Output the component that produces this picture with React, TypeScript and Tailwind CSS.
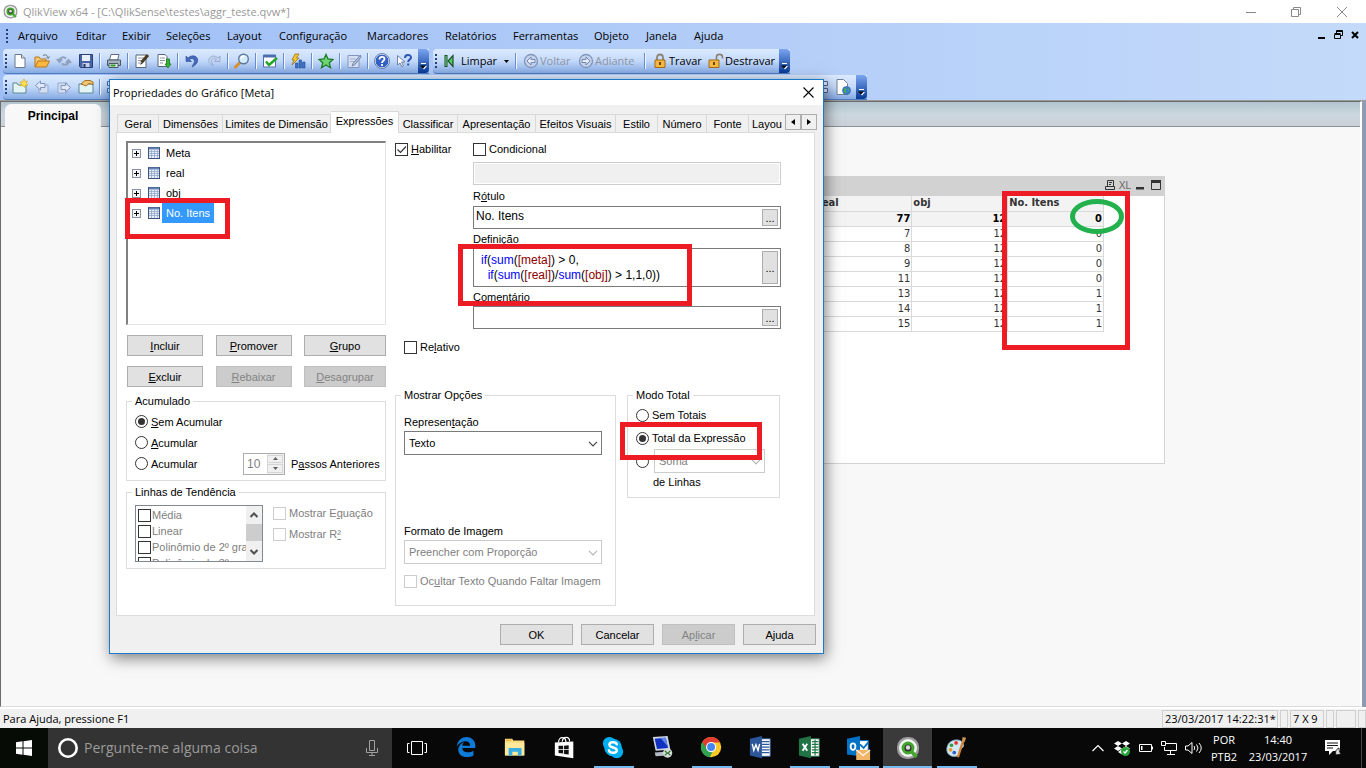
import type { ReactNode } from 'react';

const icons: Record<string, ReactNode> = {
  new: (
    <>
      <path d="M3 1.5h6.5L13 5v9.5H3z" fill="#fff" stroke="#6b7688" />
      <path d="M9.5 1.5V5H13" fill="#dfe6f2" stroke="#6b7688" />
    </>
  ),
  open: (
    <>
      <path d="M1 14V4h4l1.5 2H12v3" fill="#f7c873" stroke="#b9771d" />
      <path d="M1 14l3-6h11.5l-3 6z" fill="#fbb840" stroke="#b9771d" />
      <path d="M9 2.500c3-1.500 4.500 0 5 2m-1.500-.5l1.500 1.500 1.500-2" fill="none" stroke="#68707c" />
    </>
  ),
  refresh: (
    <g fill="none" stroke="#8fa0bd" strokeWidth="2">
      <path d="M10 5.500c-2-2-6-1.500-6.500 1.500M1 6l2.500 3L6 6" />
      <path d="M6 10.500c2 2 6 1.500 6.500-1.500M15 10l-2.500-3L10 10" />
    </g>
  ),
  save: (
    <>
      <path d="M1.500 1.500h13v13h-12l-1-1z" fill="#4763a8" stroke="#2b4179" />
      <path d="M4 2h8v6H4z" fill="#e9eef8" />
      <path d="M4.500 10h7v4h-7z" fill="#c9d2e4" />
      <path d="M5.500 11h2v3h-2z" fill="#22325f" />
    </>
  ),
  print: (
    <>
      <path d="M5 1.500h8L11.500 7h-8z" fill="#fff" stroke="#5f6b7c" />
      <path d="M1.500 7h13v5.500h-13z" fill="#a8b2bf" stroke="#4c5868" />
      <path d="M3 10.500h9v4H3z" fill="#e4e9ef" stroke="#4c5868" />
      <path d="M4.500 12.500h5" stroke="#2ba02b" strokeWidth="2" />
    </>
  ),
  edit: (
    <>
      <path d="M2 2h10v12.500H2z" fill="#fff" stroke="#5b6678" />
      <path d="M4 5h6M4 7.500h5M4 10h3" stroke="#8d98aa" />
      <path d="M14 2L7.500 9.500" stroke="#4d3a22" strokeWidth="3" />
      <path d="M7.500 9.500L6 12l2.500-1.500" fill="#222" />
    </>
  ),
  export: (
    <>
      <path d="M2 1.500h7l2 2v10H2z" fill="#fff" stroke="#5b6678" />
      <path d="M4 5h5M4 7.500h5M4 10h3" stroke="#8d98aa" />
      <path d="M10.500 6h3v5H15l-3 4-3-4h1.500z" fill="#35b535" stroke="#1b7a1b" strokeWidth=".8" />
    </>
  ),
  undo: <path d="M2 3v5.500h5.500L5.500 6.500c3-2 6 0 4.500 3.500-.5 1.200-1.500 2.200-2 4 4-2 6.500-5 5.500-8C12.500 2.500 7.500 1.500 4 5z" fill="#4668ba" stroke="#2f4d96" strokeWidth=".6" />,
  redo: <path d="M14 3v5.500H8.500l2-2c-3-2-6 0-4.500 3.500.5 1 1 1.800 1.500 2.500C3.500 11 2 8.500 3 6c1.500-3.500 6-4 9-1z" fill="#c3d2ec" stroke="#8ea3c9" strokeWidth=".8" />,
  search: (
    <>
      <path d="M6 9.500L1.500 14" stroke="#d98f2b" strokeWidth="3" strokeLinecap="round" />
      <circle cx="9.500" cy="6" r="4.800" fill="#d5ecfb" stroke="#60789a" strokeWidth="1.400" />
      <path d="M7 5.500C7.500 3.500 9 3 10.500 3" fill="none" stroke="#fff" strokeWidth="1.500" />
    </>
  ),
  check: (
    <>
      <path d="M1.500 2h12v12h-12z" fill="#fff" stroke="#4c6eae" />
      <path d="M1.500 2h12v2.500h-12z" fill="#4c6eae" />
      <path d="M4 8.500l3 3.500L15 5" fill="none" stroke="#27a527" strokeWidth="2.600" />
    </>
  ),
  quick: (
    <>
      <path d="M5 1h4L6.500 5H9L2 12l2-5H2z" fill="#f5c433" stroke="#9c761b" strokeWidth=".8" />
      <path d="M5.500 10h2.500v5H5.500zM9 7h2.500v8H9zM12.500 9H15v6h-2.500z" fill="#3d74ca" stroke="#234e96" strokeWidth=".6" />
    </>
  ),
  star: <path d="M8 1.500l2 4.500 5 .5-3.700 3.300 1.200 4.900L8 12l-4.500 2.700 1.200-4.900L1 6.500 6 6z" fill="#6fd66f" stroke="#1c7c2b" strokeWidth="1.300" />,
  note: (
    <>
      <path d="M2 2.500h11v12H2z" fill="#d5e0f4" stroke="#8496b8" />
      <path d="M4 6h6M4 8.500h4" stroke="#a0b0cf" />
      <path d="M14.500 2L7 10.500l-1 2.500 2.500-1L15 4z" fill="#b4c3dd" stroke="#7386aa" />
    </>
  ),
  help: (
    <>
      <circle cx="8" cy="8" r="7" fill="#3661c4" stroke="#fff" />
      <circle cx="8" cy="8" r="7.500" fill="none" stroke="#3b5288" strokeWidth=".7" />
      <path d="M5.500 6.500c0-3.500 5-3.500 5-.5 0 1.800-2.500 1.800-2.500 4M8 11v2" fill="none" stroke="#fff" strokeWidth="1.800" />
    </>
  ),
  whats: (
    <>
      <path d="M1.500 2.500v9.500l2.500-2 2 4 1.500-1-2-4H9z" fill="#fff" stroke="#7182a4" />
      <path d="M9 5c0-4 6-4 6-.5 0 2-2.800 2.200-2.800 4.500M12.200 10.500v2" fill="none" stroke="#2c56b4" strokeWidth="2" />
    </>
  ),
  clear: (
    <>
      <path d="M3 2v12" stroke="#1d4f2b" strokeWidth="3" />
      <path d="M3 3v10" stroke="#79e37d" />
      <path d="M10 2.500v11L5 8z" fill="#4fd257" stroke="#1d4f2b" strokeWidth="1.200" />
    </>
  ),
  back: (
    <>
      <circle cx="8" cy="8" r="6.500" fill="#c5d3ea" stroke="#8195bd" strokeWidth="1.300" />
      <path d="M8 4L4 8l4 4v-2.500h4v-3H8z" fill="#e6edf9" stroke="#7287b2" />
    </>
  ),
  forward: (
    <>
      <circle cx="8" cy="8" r="6.500" fill="#c5d3ea" stroke="#8195bd" strokeWidth="1.300" />
      <path d="M8 4l4 4-4 4V9.500H4v-3h4z" fill="#e6edf9" stroke="#7287b2" />
    </>
  ),
  lock: (
    <>
      <path d="M5 7V4.500c0-4 6-4 6 0V7" fill="none" stroke="#8c8471" strokeWidth="1.800" />
      <path d="M3 7h10v7.500H3z" fill="#f6b83f" stroke="#a36a15" />
      <path d="M8 9v3" stroke="#6c4713" strokeWidth="2" />
    </>
  ),
  unlock: (
    <>
      <path d="M8.500 7V4c0-3.500 6-3.500 6 0v1.500" fill="none" stroke="#8c8471" strokeWidth="1.600" />
      <path d="M1 7h10v7.500H1z" fill="#f6b83f" stroke="#a36a15" />
      <path d="M6 9v3" stroke="#6c4713" strokeWidth="2" />
    </>
  ),
  newSheet: (
    <>
      <path d="M1 14V4h4l1 2h8v8z" fill="#e3f5f3" stroke="#5d8796" />
      <path d="M12 0l1 2.500L15.500 2 14 4l2 2-2.500.200L12.500 8.500 11 6.500l-3 .500L9.500 5 8 3l2.500-.200z" fill="#ffe14a" stroke="#d69d1c" strokeWidth=".6" />
    </>
  ),
  sheetLeft: (
    <>
      <path d="M5 14V6h9v8z" fill="#d3def1" stroke="#96a8cb" />
      <path d="M6.500 2L1.500 6.500l5 4.500V8.500H11V4.500H6.500z" fill="#dfe8f7" stroke="#8094bd" />
    </>
  ),
  sheetRight: (
    <>
      <path d="M2 14V4h9v10z" fill="#d3def1" stroke="#96a8cb" />
      <path d="M9.500 4l5 4.500-5 4.500v-2.500H5V6.500h4.500z" fill="#dfe8f7" stroke="#8094bd" />
    </>
  ),
  sheetProps: (
    <>
      <path d="M1 14V5h14v9z" fill="#e3f5f3" stroke="#5d8796" />
      <path d="M3 5l4-3.500h5L15 3v2.500L11 4.500 8 7 5.500 6z" fill="#f3c56a" stroke="#98681f" strokeWidth=".9" />
    </>
  ),
  layout: (
    <g fill="#eaf1fc" stroke="#4766a8">
      <path d="M1.500 2.500h5v4h-5zM9.500 2.500h5v4h-5zM1.500 9.500h5v4h-5zM9.500 9.500h5v4h-5z" />
    </g>
  ),
  webPage: (
    <>
      <path d="M2 .500h6.500l4 4v11H2z" fill="#fff" stroke="#77818f" />
      <circle cx="11.500" cy="11.500" r="4" fill="#3f7fd0" stroke="#2c599c" strokeWidth=".6" />
      <path d="M9 9.500c2-1.500 3 0 2 1.500s1 2 0 3.500c-2-.5-3-3-2-5zM13 9l1.500 2-1 1.500z" fill="#3fb34a" />
    </>
  ),
};

const Icon = ({ name }: { name: string }) => (
  <svg viewBox="0 0 16 16" className="size-4 shrink-0" aria-hidden="true">
    {icons[name]}
  </svg>
);

const QlikLogo = ({ className }: { className: string }) => (
  <svg viewBox="0 0 24 24" className={className} aria-hidden="true">
    <rect x="1" y="1" width="22" height="22" rx="10" fill="#9c9c9c" />
    <circle cx="12" cy="12" r="9" fill="#f4f4f4" />
    <circle cx="12" cy="12" r="5" fill="#333" stroke="#43a62f" strokeWidth="3" />
    <path d="M15.500 15.500l5 5.500" stroke="#43a62f" strokeWidth="3.500" />
    <circle cx="12" cy="11.500" r="2.200" fill="#ddd" />
  </svg>
);

const menus = [
  ['Arquivo', 'w-[58px]'],
  ['Editar', 'w-[46px]'],
  ['Exibir', 'w-[44px]'],
  ['Seleções', 'w-[61px]'],
  ['Layout', 'w-[52px]'],
  ['Configuração', 'w-[88px]'],
  ['Marcadores', 'w-[78px]'],
  ['Relatórios', 'w-[68px]'],
  ['Ferramentas', 'w-[81px]'],
  ['Objeto', 'w-[52px]'],
  ['Janela', 'w-[48px]'],
  ['Ajuda', 'w-[48px]'],
];

const mainTools = [
  'new', 'open', 'refresh', 'save', '|', 'print', '|', 'edit', 'export', '|', 'undo', 'redo', '|',
  'search', '|', 'check', '|', 'quick', '|', 'star', '|', 'note', '|', 'help', 'whats',
];

const tabs = [
  ['Geral', 'w-[42px]'],
  ['Dimensões', 'w-[64px]'],
  ['Limites de Dimensão', 'w-[108px]'],
  ['Expressões', 'w-[68px]'],
  ['Classificar', 'w-[59px]'],
  ['Apresentação', 'w-[78px]'],
  ['Efeitos Visuais', 'w-[80px]'],
  ['Estilo', 'w-[42px]'],
  ['Número', 'w-[49px]'],
  ['Fonte', 'w-[42px]'],
  ['Layou', 'w-[36px]'],
];

const rows = [
  ['7', '12', '0'],
  ['8', '12', '0'],
  ['9', '12', '0'],
  ['11', '12', '0'],
  ['13', '12', '1'],
  ['14', '12', '1'],
  ['15', '12', '1'],
];

const Grip = () => (
  <span className="flex w-[6px] shrink-0 flex-col items-center gap-[2px]">
    <i className="size-[2px] bg-[#27417a]" />
    <i className="size-[2px] bg-[#27417a]" />
    <i className="size-[2px] bg-[#27417a]" />
    <i className="size-[2px] bg-[#27417a]" />
  </span>
);

const Separator = () => (
  <span className="flex w-[6px] shrink-0 justify-center">
    <i className="h-4 w-px bg-[#6a8ccb]" />
    <i className="h-4 w-px bg-[#f1f6ff]" />
  </span>
);

const ToolButton = ({ name, disabled }: { name: string; disabled?: boolean }) => (
  <button type="button" aria-label={name} disabled={disabled} className="flex h-[22px] w-[22px] shrink-0 items-center justify-center">
    <Icon name={name} />
  </button>
);

const MoreTools = () => (
  <button type="button" aria-label="Mais botões" className="flex h-full w-[11px] shrink-0 items-end justify-center rounded-r-sm bg-linear-to-b from-[#7ba5f0] to-[#053995] pb-[3px]">
    <svg viewBox="0 0 7 7" className="size-[7px]">
      <path d="M1 .5h5" stroke="#fff" />
      <path d="M1 3h6L4 6.500z" fill="#fff" />
      <path d="M0 2.500h6l-3 3z" fill="#000" />
    </svg>
  </button>
);

const toolbar = 'flex h-[25px] items-center rounded-l-sm border-b border-[#4f7abf] bg-linear-to-b from-[#dceafe] via-[#c3d9fa] to-[#86aae4]';

const Check = ({ children, checked, disabled }: { children: ReactNode; checked?: boolean; disabled?: boolean }) => (
  <label className={disabled ? 'flex h-[14px] items-center gap-[3px] whitespace-nowrap text-[#808080]' : 'flex h-[14px] items-center gap-[3px] whitespace-nowrap'}>
    <span className="relative flex size-[13px] shrink-0">
      <input type="checkbox" defaultChecked={checked} disabled={disabled} className="size-[13px] appearance-none border border-[#333] bg-white disabled:border-[#ccc]" />
      {checked && (
        <svg viewBox="0 0 13 13" className="pointer-events-none absolute inset-0 size-[13px]">
          <path d="M2.500 6.500l3 3 5.500-6" fill="none" stroke="#333" strokeWidth="1.200" />
        </svg>
      )}
    </span>
    <span>{children}</span>
  </label>
);

const Radio = ({ children, name, checked }: { children?: ReactNode; name: string; checked?: boolean }) => (
  <label className="flex h-[14px] items-center gap-[3px] whitespace-nowrap">
    <input
      type="radio"
      name={name}
      defaultChecked={checked}
      aria-label={children ? undefined : 'Função de linhas'}
      className="flex size-[13px] shrink-0 appearance-none items-center justify-center rounded-full border border-[#333] bg-white checked:before:size-[7px] checked:before:rounded-full checked:before:bg-[#333]"
    />
    {children && <span>{children}</span>}
  </label>
);

const PushButton = ({ children, disabled, className }: { children: ReactNode; disabled?: boolean; className: string }) => (
  <button
    type="button"
    disabled={disabled}
    className={`h-[21px] border border-[#adadad] bg-[#e1e1e1] disabled:border-[#bfbfbf] disabled:bg-[#ccc] disabled:text-[#838383] ${className}`}
  >
    {children}
  </button>
);

const Dots = () => (
  <button type="button" aria-label="Editar" className="flex w-[16px] shrink-0 items-center justify-center border border-[#adadad] bg-[#e1e1e1]">
    ...
  </button>
);

const Select = ({ id, value, disabled, className, label }: { id: string; value: string; disabled?: boolean; className: string; label?: string }) => (
  <div className={`relative ${className}`}>
    <select
      id={id}
      aria-label={label}
      disabled={disabled}
      className="h-[24px] w-full appearance-none border border-[#7a7a7a] bg-white pl-1 disabled:border-[#ccc] disabled:text-[#808080] disabled:opacity-100"
    >
      <option>{value}</option>
    </select>
    <svg viewBox="0 0 10 6" className="pointer-events-none absolute top-[10px] right-[4px] h-[6px] w-[10px]">
      <path d="M1 .8l4 4 4-4" fill="none" stroke={disabled ? '#b5b5b5' : '#444'} strokeWidth="1.200" />
    </svg>
  </div>
);

const Group = ({ title, className, children }: { title: string; className: string; children: ReactNode }) => (
  <fieldset className={`min-w-0 border border-[#dcdcdc] ${className}`}>
    <legend className="ml-[5px] h-[14px] px-[3px]">{title}</legend>
    {children}
  </fieldset>
);

const ExpressionList = () => (
  <ul className="h-[184px] border border-t-2 border-l-2 border-[#e3e3e3] border-t-[#808080] border-l-[#808080] bg-white">
    {['Meta', 'real', 'obj', 'No. Itens'].map((item) => (
      <li key={item} className="flex h-5 items-center pl-1">
        <svg viewBox="0 0 9 9" className="size-[9px]">
          <rect x=".5" y=".5" width="8" height="8" fill="#f4f4f4" stroke="#8592a8" />
          <path d="M2 4.500h5M4.500 2v5" stroke="#000" />
        </svg>
        <svg viewBox="0 0 12 12" className="ml-[7px] size-3">
          <rect x=".5" y=".5" width="11" height="11" fill="#e6eef9" stroke="#3f547d" />
          <path d="M1 1.500h10" stroke="#6482b5" strokeWidth="2" />
          <path d="M1 4.500h10M1 6.500h10M1 8.500h10M3.500 3v8M6.500 3v8M9.500 3v8" stroke="#8ba0c5" strokeWidth=".7" />
        </svg>
        <span className={item === 'No. Itens' ? 'ml-[2px] h-5 bg-[#3399ff] pr-1 pl-1 leading-5 text-white' : 'ml-[2px] pl-1 leading-5'}>{item}</span>
      </li>
    ))}
  </ul>
);

const TrendList = () => (
  <div className="flex h-[57px] w-[128px] border border-[#828790] bg-white">
    <div className="flex-1 overflow-hidden pt-px pl-[2px]">
      {['Média', 'Linear', 'Polinômio de 2º gra', 'Polinômio de 3º gra'].map((item) => (
        <label key={item} className="flex h-4 items-center gap-px whitespace-nowrap text-[#808080]">
          <input type="checkbox" className="size-[13px] shrink-0 appearance-none border border-[#333] bg-white" />
          {item}
        </label>
      ))}
    </div>
    <div className="flex w-[16px] flex-col bg-[#f0f0f0]">
      <svg viewBox="0 0 16 18" className="h-[18px]">
        <path d="M4.500 11L8 7.500l3.500 3.500" fill="none" stroke="#505050" strokeWidth="2" />
      </svg>
      <div className="h-[17px] bg-[#cdcdcd]" />
      <svg viewBox="0 0 16 20" className="h-5">
        <path d="M4.500 9L8 12.500 11.500 9" fill="none" stroke="#505050" strokeWidth="2" />
      </svg>
    </div>
  </div>
);

const LeftColumn = () => (
  <div className="w-[260px] shrink-0">
    <ExpressionList />
    <div className="mt-[10px] flex justify-between pl-px">
      <PushButton className="w-[76px]"><u>I</u>ncluir</PushButton>
      <PushButton className="w-[76px]"><u>P</u>romover</PushButton>
      <PushButton className="w-[82px]"><u>G</u>rupo</PushButton>
    </div>
    <div className="mt-[10px] flex justify-between pl-px">
      <PushButton className="w-[76px]"><u>E</u>xcluir</PushButton>
      <PushButton className="w-[76px]" disabled><u>R</u>ebaixar</PushButton>
      <PushButton className="w-[82px]" disabled><u>D</u>esagrupar</PushButton>
    </div>

    <Group title="Acumulado" className="mt-[7px] pb-[6px]">
      <div className="flex flex-col pt-[3px] pl-2">
        <div className="flex h-[21px] items-center"><Radio name="acc" checked><u>S</u>em Acumular</Radio></div>
        <div className="flex h-[21px] items-center"><Radio name="acc"><u>A</u>cumular</Radio></div>
        <div className="flex h-[21px] items-center">
          <div className="w-[108px]"><Radio name="acc">Acumular</Radio></div>
          <div className="flex h-[22px] w-[42px] border border-[#adadad] bg-white">
            <input id="steps" defaultValue="10" disabled className="w-[23px] pl-[3px] text-xs text-[#808080]" />
            <div className="flex flex-1 flex-col gap-px bg-[#f0f0f0] py-px pr-px">
              <button type="button" aria-label="Mais" className="flex flex-1 items-center justify-center border border-[#d5d5d5]">
                <svg viewBox="0 0 5 3" className="h-[3px] w-[5px]"><path d="M0 3h5L2.500 0z" fill="#606060" /></svg>
              </button>
              <button type="button" aria-label="Menos" className="flex flex-1 items-center justify-center border border-[#d5d5d5]">
                <svg viewBox="0 0 5 3" className="h-[3px] w-[5px]"><path d="M0 0h5L2.500 3z" fill="#606060" /></svg>
              </button>
            </div>
          </div>
          <label htmlFor="steps" className="ml-[6px] whitespace-nowrap">P<u>a</u>ssos Anteriores</label>
        </div>
      </div>
    </Group>

    <Group title="Linhas de Tendência" className="mt-1 pb-[6px]">
      <div className="flex gap-[10px] pt-[6px] pl-2">
        <TrendList />
        <div className="flex flex-col gap-[7px] pt-px">
          <Check disabled>Mostrar E<u>q</u>uação</Check>
          <Check disabled>Mostrar R<u>²</u></Check>
        </div>
      </div>
    </Group>
  </div>
);

const Fn = ({ children }: { children: ReactNode }) => <span className="text-[#0000ff]">{children}</span>;
const Field = ({ children }: { children: ReactNode }) => <span className="text-[#8b0000]">{children}</span>;

const RightColumn = () => (
  <div className="w-[386px] shrink-0">
    <div className="flex pt-px">
      <div className="w-[78px]"><Check checked><u>H</u>abilitar</Check></div>
      <div className="flex-1">
        <Check>Condicional</Check>
        <input aria-label="Condição" disabled className="mt-[6px] block h-[23px] w-full border border-[#ccc] bg-[#f0f0f0] outline-1 -outline-offset-2 outline-white" />
        <label htmlFor="rotulo" className="block pt-1 pb-[3px]">R<u>ó</u>tulo</label>
        <div className="flex h-[23px] border border-[#7a7a7a] bg-white p-[2px]">
          <input id="rotulo" defaultValue="No. Itens" className="min-w-0 flex-1 pb-1 text-xs outline-none" />
          <Dots />
        </div>
        <p id="definicao" className="pt-[3px] pb-[2px]">Definição</p>
        <div className="flex h-[39px] border border-[#7a7a7a] bg-white p-[2px]">
          <div role="textbox" aria-labelledby="definicao" className="flex-1 pt-[2px] pl-[5px] text-xs leading-[15px] whitespace-pre text-black">
            <Fn>if</Fn>(<Fn>sum</Fn>(<Field>[meta]</Field>) &gt; 0,{'\n  '}
            <Fn>if</Fn>(<Fn>sum</Fn>(<Field>[real]</Field>)/<Fn>sum</Fn>(<Field>[obj]</Field>) &gt; 1,1,0))
          </div>
          <Dots />
        </div>
        <label htmlFor="comentario" className="block pt-[3px] pb-[2px]">Comentário</label>
        <div className="flex h-[23px] border border-[#7a7a7a] bg-white p-[2px]">
          <input id="comentario" className="min-w-0 flex-1 outline-none" />
          <Dots />
        </div>
      </div>
    </div>

    <div className="mt-[11px] pl-[9px]"><Check>Re<u>l</u>ativo</Check></div>

    <div className="mt-[34px] flex items-start gap-[11px]">
      <Group title="Mostrar Opções" className="w-[221px] pb-[17px]">
        <div className="pt-[13px] pr-[13px] pl-2">
          <label htmlFor="rep" className="block pb-[2px]">Represen<u>t</u>ação</label>
          <Select id="rep" value="Texto" className="w-full" />
          <label htmlFor="fmt" className="mt-[69px] block pb-[2px]">Formato de Imagem</label>
          <Select id="fmt" value="Preencher com Proporção" className="w-full" disabled />
          <div className="mt-[10px]"><Check disabled>Oc<u>u</u>ltar Texto Quando Faltar Imagem</Check></div>
        </div>
      </Group>
      <Group title="Modo Total" className="w-[153px] pb-2">
        <div className="flex flex-col pt-[6px] pl-2">
          <Radio name="total">Sem Totais</Radio>
          <div className="mt-[9px]"><Radio name="total" checked>Total da Expressão</Radio></div>
          <div className="mt-1 flex items-center gap-[5px]">
            <Radio name="total" />
            <Select id="agg" value="Soma" label="Soma" className="w-[111px]" disabled />
          </div>
          <span className="mt-[2px] pl-[17px]">de Linhas</span>
        </div>
      </Group>
    </div>
  </div>
);

const Dialog = () => (
  <div
    role="dialog"
    aria-label="Propriedades do Gráfico"
    className="absolute top-[79px] left-[109px] w-[715px] border border-[#1979ca] bg-[#f0f0f0] font-['Liberation_Sans',Arial,sans-serif] text-[11px] leading-[14px] text-black shadow-[2px_4px_14px_rgba(0,0,0,0.5)]"
  >
    <div className="flex h-[25px] items-center justify-between bg-white pr-[9px] pl-[3px]">
      <h2 className="font-['Open_Sans',sans-serif] text-[11px]">Propriedades do Gráfico [Meta]</h2>
      <button type="button" aria-label="Fechar">
        <svg viewBox="0 0 11 11" className="size-[11px]"><path d="M.5.5l10 10M10.500.5l-10 10" stroke="#000" strokeWidth="1.100" /></svg>
      </button>
    </div>

    <div className="flex h-[27px] items-end pr-[7px] pl-[7px]">
      <div role="tablist" className="z-10 -mb-px flex flex-1 items-end">
        {tabs.map(([name, width]) => (
          <button
            key={name}
            type="button"
            role="tab"
            aria-selected={name === 'Expressões'}
            className={`h-[19px] shrink-0 border-t border-r border-b border-[#d9d9d9] whitespace-nowrap first:border-l last:border-r-0 aria-selected:h-[22px] aria-selected:border-b-0 aria-selected:bg-white aria-selected:pb-1 ${width}`}
          >
            {name}
          </button>
        ))}
      </div>
      <div className="mb-[2px] flex">
        <button type="button" aria-label="Anterior" className="flex size-4 items-center justify-center border border-[#adadad] bg-[#f0f0f0]">
          <svg viewBox="0 0 4 6" className="h-[6px] w-1"><path d="M4 0v6L0 3z" /></svg>
        </button>
        <button type="button" aria-label="Próximo" className="flex size-4 items-center justify-center border border-[#adadad] bg-[#f0f0f0]">
          <svg viewBox="0 0 4 6" className="h-[6px] w-1"><path d="M0 0v6l4-3z" /></svg>
        </button>
      </div>
    </div>

    <div className="mr-2 ml-[6px] flex gap-[9px] border border-[#dcdcdc] bg-white px-[9px] pt-2 pb-[9px]">
      <LeftColumn />
      <RightColumn />
    </div>

    <div className="flex justify-end gap-2 pt-2 pr-[7px] pb-2">
      <PushButton className="w-[73px]">OK</PushButton>
      <PushButton className="w-[73px]">Cancelar</PushButton>
      <PushButton className="w-[73px]" disabled>Ap<u>l</u>icar</PushButton>
      <PushButton className="w-[73px]">Ajuda</PushButton>
    </div>
  </div>
);

const Chart = () => (
  <section className="h-[288px] w-[350px] border border-[#d2d2d2] bg-white font-['DejaVu_Sans_Condensed','DejaVu_Sans',sans-serif] text-[11px] text-[#333]">
    <header className="flex h-[19px] items-center justify-end gap-1 bg-[#d2d2d2] pr-[3px] pb-[3px]">
      <svg viewBox="0 0 10 10" className="size-[10px]" fill="none" stroke="#333">
        <path d="M2.500 6V.5h6V6M.5 6.500h9v3h-9zM4 2.500h3M4 4.500h2" />
      </svg>
      <span className="font-['Open_Sans',sans-serif] text-[11px] text-[#666]">XL</span>
      <svg viewBox="0 0 10 10" className="size-[10px]"><path d="M1 7h8v2.500H1z" fill="#333" /></svg>
      <svg viewBox="0 0 10 10" className="ml-[2px] size-[10px]"><path d="M.5 1.500h9v8h-9zM0 1.500h10" fill="none" stroke="#333" /><path d="M0 0h10v3H0z" fill="#333" /></svg>
    </header>
    <table className="w-[288px] table-fixed border-collapse leading-[14px]">
      <thead>
        <tr className="h-[15px] bg-[#f3f3f3] text-left">
          <th className="border-r border-b border-[#d9d9d9] pl-px">real</th>
          <th className="border-r border-b border-[#d9d9d9] pl-px">obj</th>
          <th className="border-r border-b border-[#d9d9d9] pl-px">No. Itens</th>
        </tr>
      </thead>
      <tbody>
        <tr className="h-[15px] bg-[#f3f3f3] text-right font-bold text-black">
          <td className="border-r border-b border-[#d9d9d9] pr-px">77</td>
          <td className="border-r border-b border-[#d9d9d9] pr-px">12</td>
          <td className="border-r border-b border-[#d9d9d9] pr-px">0</td>
        </tr>
        {rows.map((row) => (
          <tr key={row[0]} className="h-[15px] text-right">
            {row.map((value, i) => (
              <td key={i} className="border-r border-b border-[#d9d9d9] pr-px">{value}</td>
            ))}
          </tr>
        ))}
      </tbody>
    </table>
  </section>
);

const apps: { name: string; running?: boolean; active?: boolean; icon: ReactNode }[] = [
  {
    name: 'Edge',
    icon: <path d="M2 11C3 4 8 1 12.500 1 18 1 22 5 22 10v3H8c0 5 7 6 12 3v5C12 25 3 22 3.500 14 4 10 7 7.500 10 6.500 8.500 8 8 9.500 8 10.500h8.500C16.500 4 7 4 2 11z" fill="#0f7bd8" />,
  },
  {
    name: 'Explorador',
    icon: (
      <>
        <path d="M1 3h8l1 2h12v16H1z" fill="#f9d978" />
        <path d="M2 4h6v1H2z" fill="#e2a92e" />
        <path d="M1 7h21v14H1z" fill="#ffe79b" />
        <path d="M5 21v-8h14v8h-4v-4H9v4z" fill="#38aee6" />
      </>
    ),
  },
  {
    name: 'Loja',
    icon: (
      <>
        <path d="M2 7l20-1v18L2 21z" fill="#fff" />
        <path d="M6 7c0-7 8-7 8 0M10 6c1-6 8-6 8 0" fill="none" stroke="#fff" strokeWidth="1.300" />
        <path d="M6 10.500h5V14H6zM12 10.500l5-.5v4h-5zM6 15h5v4l-5-.5zM12 15h5v5l-5-.5z" fill="#111" />
      </>
    ),
  },
  {
    name: 'Skype',
    running: true,
    icon: (
      <>
        <circle cx="8" cy="8" r="7" fill="#00aff0" />
        <circle cx="16" cy="17" r="7" fill="#00aff0" />
        <circle cx="12" cy="12.500" r="9.500" fill="#00aff0" />
        <path d="M16 9c-1-3-8-3-8 .5 0 4 8 2 8 6 0 3.500-7.500 3.500-8.500 0" fill="none" stroke="#fff" strokeWidth="2.600" strokeLinecap="round" />
      </>
    ),
  },
  {
    name: 'Área de Trabalho Remota',
    icon: (
      <>
        <path d="M2 1l16-1 3 15-16 1z" fill="#cdd6e2" />
        <path d="M4 3l12-1 2.500 11-12 1z" fill="#1130c0" />
        <path d="M10 2l6 0 2 9z" fill="#5b84ec" />
        <path d="M4 18l11-1 4 4-14 1z" fill="#b3bac4" />
        <circle cx="18" cy="18.500" r="5" fill="#d9dcd9" />
        <path d="M15 16l2.500 2.500L15 21M21 16l-2.500 2.500L21 21" fill="none" stroke="#39823b" strokeWidth="1.500" />
      </>
    ),
  },
  {
    name: 'Chrome',
    running: true,
    icon: (
      <>
        <circle cx="12" cy="12" r="11" fill="#fbc928" />
        <path d="M12 12L2.500 6.500A11 11 0 0 0 10.500 23L16 13z" fill="#2fa14f" />
        <path d="M12 7h9.800A11 11 0 0 0 2.500 6.500L7.700 14z" fill="#e23d31" />
        <circle cx="12" cy="12" r="5.500" fill="#fff" />
        <circle cx="12" cy="12" r="4.300" fill="#4387f4" />
      </>
    ),
  },
  {
    name: 'Word',
    icon: (
      <>
        <path d="M11 3h12v19H11z" fill="#fff" stroke="#2b579a" />
        <path d="M14 6h8M14 9h8M14 12h8M14 15h8M14 18h8" stroke="#2b579a" strokeWidth="1.300" />
        <path d="M1 3l13-3v24L1 21z" fill="#2b579a" />
        <path d="M3.500 8.500l1.700 7 2.300-6 2.300 6 1.700-7" fill="none" stroke="#fff" strokeWidth="1.500" />
      </>
    ),
  },
  {
    name: 'Excel',
    running: true,
    icon: (
      <>
        <path d="M11 3h12v19H11z" fill="#fff" stroke="#217346" />
        <path d="M15 6h7M15 9h7M15 12h7M15 15h7M15 18h7M18.500 4v17" stroke="#217346" strokeWidth="1.300" />
        <path d="M1 3l13-3v24L1 21z" fill="#217346" />
        <path d="M5 8.500l5 7.500M10 8.500L5 16" stroke="#fff" strokeWidth="2" />
      </>
    ),
  },
  {
    name: 'Outlook',
    running: true,
    icon: (
      <>
        <path d="M13 5h10v11H13z" fill="#fff" stroke="#0072c6" />
        <path d="M14 9l4 4 5-6" fill="none" stroke="#0072c6" strokeWidth="2" />
        <path d="M0 3l14-3v22L0 20z" fill="#0072c6" />
        <ellipse cx="6.500" cy="11.500" rx="2.600" ry="3.500" fill="none" stroke="#fff" strokeWidth="2" />
        <path d="M10 15h15v11H10z" fill="#f2b568" />
        <path d="M10 15l7.500 6 7.500-6" fill="none" stroke="#fff" strokeWidth="1.300" />
      </>
    ),
  },
  { name: 'QlikView', running: true, active: true, icon: null },
  {
    name: 'Paint',
    running: true,
    icon: (
      <>
        <path d="M3 10C6 3 18 2 20 9c1 4-3 4-4 6s1 6-4 7C4 23 0 17 3 10z" fill="#d2e8f5" stroke="#89aec6" />
        <circle cx="7" cy="10" r="2" fill="#3b9c43" />
        <circle cx="12" cy="7.500" r="2" fill="#e1352d" />
        <circle cx="6" cy="15" r="2" fill="#e59b28" />
        <circle cx="10" cy="18" r="2" fill="#315fcc" />
        <path d="M20 4l-6 19" stroke="#d98434" strokeWidth="2.500" />
        <path d="M18.500 6l.5-5 4 1-2 5z" fill="#c9924e" />
      </>
    ),
  },
];

const Taskbar = () => (
  <footer className="flex h-10 shrink-0 bg-[#080808] font-['Open_Sans',sans-serif] text-white">
    <button type="button" aria-label="Iniciar" className="flex w-12 items-center justify-center bg-[#070b05]">
      <svg viewBox="0 0 16 16" className="size-4" fill="#fff">
        <path d="M0 2.200l6.500-.9v6.200H0zM7.500 1.200L16 0v7.500H7.500zM0 8.500h6.500v6.200L0 13.800zM7.500 8.500H16V16l-8.500-1.200z" />
      </svg>
    </button>
    <div className="flex w-[344px] items-center bg-[#333] pr-[14px] pl-[9px]">
      <svg viewBox="0 0 22 22" className="size-[22px]"><circle cx="11" cy="11" r="8.700" fill="none" stroke="#fff" strokeWidth="2.600" /></svg>
      <input aria-label="Pesquisar" placeholder="Pergunte-me alguma coisa" className="ml-[5px] min-w-0 flex-1 text-sm outline-none placeholder:text-[#9a9a9a]" />
      <svg viewBox="0 0 12 16" className="h-4 w-3" fill="none" stroke="#a0a0a0">
        <path d="M3.500.5h5v10h-5zM.5 8v4.500h11V8M6 12.500v3M3 15.500h6" />
      </svg>
    </div>
    <button type="button" aria-label="Visão de tarefas" className="flex w-[50px] items-center justify-center">
      <svg viewBox="0 0 20 14" className="h-[14px] w-5" fill="none" stroke="#fff">
        <path d="M4.500.5h11v13h-11zM2.500 2.500h-2v9h2M17.500 2.500h2v9h-2" />
      </svg>
    </button>
    {apps.map((app) => (
      <button
        key={app.name}
        type="button"
        aria-label={app.name}
        className={app.active ? 'flex w-[49px] flex-col items-center justify-between bg-[#3a3a3a] pt-2' : 'flex w-[49px] flex-col items-center justify-between pt-2'}
      >
        {app.icon ? <svg viewBox="0 0 26 26" className="size-6">{app.icon}</svg> : <QlikLogo className="size-6" />}
        {app.running && <i className={app.active ? 'h-[2px] w-full bg-[#76b9ed]' : 'h-[2px] w-10 bg-[#76b9ed]'} />}
      </button>
    ))}
    <div className="ml-auto flex items-center text-center text-[11px] leading-[17px]">
      <svg viewBox="0 0 12 8" className="h-2 w-3"><path d="M.5 7L6 1.500 11.500 7" fill="none" stroke="#fff" strokeWidth="1.200" /></svg>
      <svg viewBox="0 0 16 16" className="ml-[10px] size-4">
        <path d="M4 1l4 2.500L4 6 0 3.500zM12 1l4 2.500L12 6 8 3.500zM4 6l4 2.500L4 11 0 8.500zM12 6l4 2.500-4 2.500-4-2.500zM4 12l4-3 4 3-4 2.500z" fill="#fff" />
        <circle cx="11.500" cy="11.500" r="4.500" fill="#2aa63c" />
        <path d="M9.500 11.500l1.500 1.500 2.500-3" fill="none" stroke="#fff" strokeWidth="1.300" />
      </svg>
      <svg viewBox="0 0 16 10" className="ml-2 h-[10px] w-4" fill="none" stroke="#fff"><path d="M1.500 1.500h12v7h-12zM14.500 3.500v3" /><path d="M3 3h1.500v4H3z" fill="#fff" stroke="none" /></svg>
      <svg viewBox="0 0 17 14" className="ml-[7px] h-[14px] w-[17px]" fill="none" stroke="#fff"><path d="M5 2.500h10.500v7H3.500V6M9.500 10v3M6 13.500h8M.5.5h4v4h-4z" /></svg>
      <svg viewBox="0 0 17 14" className="ml-[7px] h-[14px] w-[17px]" fill="none" stroke="#fff"><path d="M.5 5h2.500l4-3.500v11L3 9H.5zM9 5q1.500 2 0 4M11.500 3.500q3 3.500 0 7M14 2q4.500 5 0 10" /></svg>
      <div className="ml-2 w-[28px]">POR<br />PTB2</div>
      <div className="ml-[6px] w-[68px]">14:40<br />23/03/2017</div>
      <svg viewBox="0 0 18 18" className="ml-3 size-[18px]">
        <path d="M1 1h15v11H9l-4 4v-4H1z" fill="#fff" />
        <path d="M3 4h11M3 6.500h11M3 9h6" stroke="#111" />
        <path d="M12 16c-1-3 0-6 3-7 0 3 1 5 2 6z" fill="#ddd" stroke="#111" strokeWidth=".8" />
      </svg>
      <i className="ml-[19px] h-10 w-px bg-[#444]" />
      <i className="w-1" />
    </div>
  </footer>
);

const redMark = 'pointer-events-none absolute border-[5px] border-[#ed1c24]';

const App = () => (
  <div className="relative flex h-screen flex-col overflow-hidden bg-[#f0f0f0] font-['Open_Sans',sans-serif] text-[11px] leading-[14px] text-black">
    <header className="flex h-[23px] shrink-0 items-center bg-white pl-[3px] text-[#999]">
      <QlikLogo className="size-[15px]" />
      <h1 className="ml-[5px] flex-1 text-[11px]">QlikView x64 - [C:\QlikSense\testes\aggr_teste.qvw*]</h1>
      <button type="button" aria-label="Minimizar" className="flex w-[45px] justify-center"><svg viewBox="0 0 10 10" className="size-[10px]"><path d="M0 5.500h10" stroke="#888" /></svg></button>
      <button type="button" aria-label="Restaurar" className="flex w-[45px] justify-center"><svg viewBox="0 0 10 10" className="size-[10px]" fill="none" stroke="#888"><path d="M.5 2.500h7v7h-7zM2.500 2V.5h7v7H8" /></svg></button>
      <button type="button" aria-label="Fechar janela" className="flex w-[48px] justify-center"><svg viewBox="0 0 10 10" className="size-[10px]"><path d="M0 0l10 10M10 0L0 10" stroke="#888" /></svg></button>
    </header>

    <div className="shrink-0 bg-linear-to-r from-[#9ebef5] to-[#c4dafa]">
      <nav className="flex h-[26px] items-center pl-1">
        <Grip />
        <div className="ml-2 flex flex-1">
          {menus.map(([name, width]) => (
            <button key={name} type="button" className={`text-left whitespace-nowrap ${width}`}>{name}</button>
          ))}
        </div>
        <div className="flex items-center gap-2 pr-[7px] pb-[3px]">
          <svg viewBox="0 0 8 9" className="h-[9px] w-2"><path d="M0 8h7" stroke="#000" strokeWidth="2" /></svg>
          <svg viewBox="0 0 9 9" className="size-[9px]" fill="none" stroke="#000"><path d="M.5 4.500h6v4h-6zM.5 3.500h6M2.500 3V.5h6v5H7M2.500 1.500h6" /></svg>
          <svg viewBox="0 0 8 8" className="size-2"><path d="M1 1l6 6M7 1L1 7" stroke="#000" strokeWidth="2" /></svg>
        </div>
      </nav>

      <div className="flex h-[26px] items-start gap-1 pl-[3px]">
        <div className={toolbar}>
          <Grip />
          {mainTools.map((tool, i) => (tool === '|' ? <Separator key={i} /> : <ToolButton key={i} name={tool} disabled={tool === 'refresh' || tool === 'redo' || tool === 'note'} />))}
          <i className="w-[3px]" />
          <MoreTools />
        </div>
        <div className={toolbar}>
          <Grip />
          <button type="button" className="ml-1 flex w-[66px] items-center gap-[2px]">
            <Icon name="clear" />
            Limpar
            <svg viewBox="0 0 5 3" className="ml-auto h-[3px] w-[5px]"><path d="M0 0h5L2.500 3z" /></svg>
          </button>
          <i className="w-1" />
          <Separator />
          <button type="button" disabled className="ml-1 flex w-[55px] items-center gap-px text-[#8d94a3]"><Icon name="back" />Voltar</button>
          <button type="button" disabled className="flex w-[64px] items-center gap-px text-[#8d94a3]"><Icon name="forward" />Adiante</button>
          <Separator />
          <button type="button" className="ml-1 flex w-[56px] items-center gap-px"><Icon name="lock" />Travar</button>
          <button type="button" className="flex w-[71px] items-center gap-px"><Icon name="unlock" />Destravar</button>
          <MoreTools />
        </div>
      </div>

      <div className="flex h-[25px] pl-[3px]">
        <div className={`${toolbar} w-[864px]`}>
          <Grip />
          <ToolButton name="newSheet" />
          <ToolButton name="sheetLeft" disabled />
          <ToolButton name="sheetRight" disabled />
          <ToolButton name="sheetProps" />
          <Separator />
          <ToolButton name="layout" />
          <span className="ml-auto flex">
            <ToolButton name="layout" />
            <ToolButton name="webPage" />
          </span>
          <i className="w-[2px]" />
          <MoreTools />
        </div>
      </div>
    </div>

    <main className="flex min-h-0 flex-1 border-t border-[#9a9a9a]">
      <div className="flex flex-1 flex-col border-t border-r-2 border-b border-l border-t-[#6c6c6c] border-r-white border-b-[#dcdcdc] border-l-[#6c6c6c] bg-[#f8f8f8]">
        <div className="flex h-[25px] shrink-0 items-end bg-linear-to-b from-[#b1c5cf] via-[#ccd7df] to-[#c9cfd6] pl-1 shadow-[inset_0_-1px_0_#8d9297]">
          <button type="button" className="h-[23px] w-[96px] rounded-t-md bg-[#f8f8f8] font-['Liberation_Sans',Arial,sans-serif] text-xs font-bold">Principal</button>
        </div>
        <div className="pt-[49px] pl-[814px]">
          <Chart />
        </div>
      </div>
      <div className="w-1 bg-[#8f9bb5]" />
    </main>

    <div className="flex h-[21px] shrink-0 items-center gap-[2px] border-t-2 border-white pl-[3px]">
      <span className="flex-1">Para Ajuda, pressione F1</span>
      <span className="h-[18px] w-[116px] border border-[#d0d0d0] pl-[2px] leading-4 whitespace-nowrap">23/03/2017 14:22:31*</span>
      <span className="h-[18px] w-2 border border-[#d0d0d0]" />
      <span className="h-[18px] w-[34px] border border-[#d0d0d0] pl-[2px] leading-4 whitespace-nowrap">7 X 9</span>
      <span className="h-[18px] w-2 border border-[#d0d0d0]" />
      <span className="h-[18px] w-5 border border-[#d0d0d0]" />
      <span className="h-[18px] w-2 border border-[#d0d0d0]" />
    </div>

    <Taskbar />
    <Dialog />

    <div className={`${redMark} top-[198px] left-[125px] h-[41px] w-[105px]`} />
    <div className={`${redMark} top-[244px] left-[458px] h-[62px] w-[234px]`} />
    <div className={`${redMark} top-[422px] left-[620px] h-[38px] w-[142px]`} />
    <div className={`${redMark} top-[191px] left-[1002px] h-[159px] w-[128px]`} />
    <svg viewBox="0 0 54 35" className="pointer-events-none absolute top-[199px] left-[1070px] h-[35px] w-[54px]">
      <ellipse cx="27" cy="17.500" rx="24.500" ry="15" fill="none" stroke="#22b14c" strokeWidth="5" />
    </svg>
  </div>
);

export default App;
